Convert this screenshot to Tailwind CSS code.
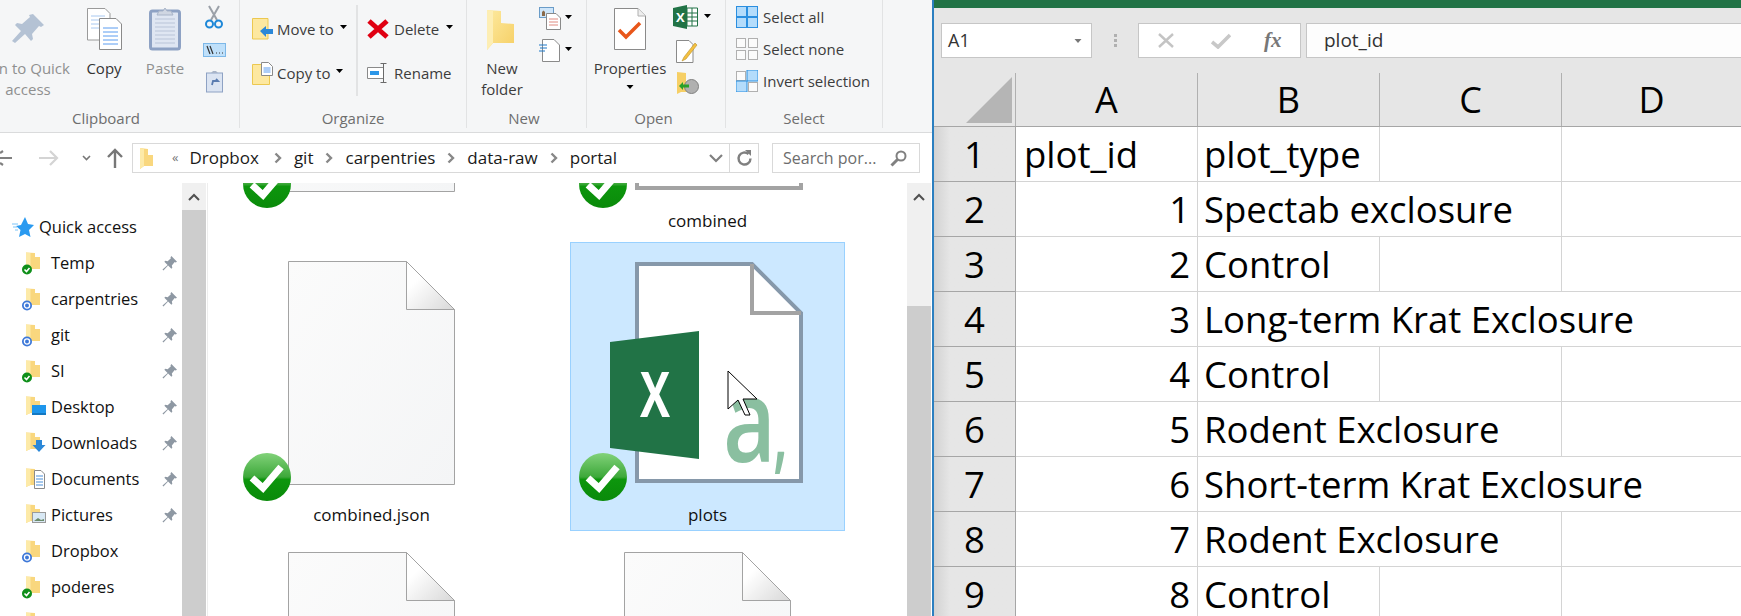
<!DOCTYPE html>
<html lang="en">
<head>
    <meta charset="UTF-8">
    <title>Explorer and Excel</title>
    <script src="https://cdn.jsdelivr.net/npm/@tailwindcss/browser@4"></script>
</head>
<body class="w-[1741px] h-[616px] overflow-hidden bg-white font-['Open_Sans',sans-serif]">

    <!-- shared icon shapes -->
    <svg class="absolute w-0 h-0">
        <defs>
            <linearGradient id="fold" x1="0" y1="0" x2="1" y2="1"><stop offset="0.3" stop-color="#ffffff"/><stop offset="1" stop-color="#d8d8d8"/></linearGradient>
            <linearGradient id="paper" x1="0" y1="0" x2="1" y2="1"><stop offset="0" stop-color="#fbfbfb"/><stop offset="1" stop-color="#f4f5f6"/></linearGradient>
            <linearGradient id="folderfill" x1="0" y1="0" x2="1" y2="1"><stop offset="0" stop-color="#fdeaa0"/><stop offset="1" stop-color="#f6cf65"/></linearGradient>
            <linearGradient id="gloss" x1="0" y1="0" x2="0" y2="1"><stop offset="0" stop-color="#82d27a"/><stop offset="0.5" stop-color="#3da83a"/><stop offset="0.55" stop-color="#0d960d"/><stop offset="1" stop-color="#0a8a0a"/></linearGradient>
            <symbol id="caret" viewBox="0 0 7 4"><path d="M0 0h7L3.500 4z" fill="#000"/></symbol>
            <symbol id="navpin" viewBox="0 0 16 16"><path d="M10 0l6 6-1.500 1-1-.5L10.500 10l.5 2.500-1 1-3.500-3.500L1.500 15.500.5 14.500 6 9.500 2.500 6l1-1 2.500.5L9.500 2.500 9 1.500z" fill="#8e98a3"/></symbol>
            <symbol id="navfolder" viewBox="0 0 24 24"><path d="M6 1.500l9 .5v4h5v12H10.500L6 20z" fill="#f9d77e"/><path d="M6 1.500l4.500 .5v16L6 20z" fill="#fdeaa8"/></symbol>
            <symbol id="synced" viewBox="0 0 24 24"><circle cx="7" cy="18.500" r="5" fill="#0f8f1a"/><path d="M4.500 18.500l2 2 3-3.500" fill="none" stroke="#fff" stroke-width="1.600"/></symbol>
            <symbol id="syncing" viewBox="0 0 24 24"><circle cx="7" cy="18.500" r="5" fill="#3d78d8"/><circle cx="7" cy="18.500" r="2.600" fill="none" stroke="#fff" stroke-width="1.300"/></symbol>
            <symbol id="tilecheck" viewBox="0 0 48 48"><circle cx="24" cy="24" r="24" fill="url(#gloss)"/><path d="M9 25l11 10L38 14" fill="none" stroke="#fff" stroke-width="7"/></symbol>
            <symbol id="blankfile" viewBox="0 0 275 262"><path d="M54.500 19.500H172.500L220.500 67.500V242.500H54.500z" fill="url(#paper)" stroke="#a3a3a3"/><path d="M172.500 19.500L220.500 67.500H172.500z" fill="url(#fold)" stroke="#a3a3a3"/></symbol>
            <symbol id="excelfile" viewBox="0 0 275 262"><path d="M67 22H182L231 71V239H67z" fill="#fff" stroke="currentColor" stroke-width="4"/><path d="M182 22V71H231" fill="none" stroke="#a3a3a3" stroke-width="4"/><path d="M40 100L129 89V217L40 206z" fill="#217346"/><text x="70" y="175" font-family="Open Sans" font-weight="700" font-size="62" fill="#fff" textLength="30" lengthAdjust="spacingAndGlyphs">X</text><text x="153" y="220" font-family="Open Sans" font-weight="600" font-size="116" fill="#8abfa0" textLength="53" lengthAdjust="spacingAndGlyphs">a</text><text x="203" y="220" font-family="Open Sans" font-weight="600" font-size="90" fill="#8abfa0" textLength="15" lengthAdjust="spacingAndGlyphs">,</text></symbol>
        </defs>
    </svg>

    <div class="flex h-[616px]">

        <!-- File Explorer window -->
        <div class="w-[934px] h-[616px] shrink-0 flex flex-col border-r-2 border-[#2b7fc0] overflow-hidden text-[15px] text-[#222]">

            <!-- ribbon -->
            <div class="h-[133px] shrink-0 flex bg-[#f5f6f7] border-b border-[#dadbdc] pb-[4px] text-[#3c3c3c]">

                <!-- Clipboard -->
                <div class="w-[240px] shrink-0 border-r border-[#e2e3e4] overflow-hidden">
                    <div class="w-[268px] -ml-[28px] flex flex-col">
                        <div class="h-[109px] flex">
                            <div class="w-[112px] flex flex-col items-center text-[#8f9090] leading-[21px] text-center">
                                <svg class="w-[32px] h-[52px] mt-[6px] mb-0 shrink-0" viewBox="0 0 32 52"><path d="M21 8l11 11-3 2-2-1-7 8 1 5-2 2-6-7-10 9-3-2 9-10-6-6 2-2 5 1 8-7-1-2z" fill="#b4c2d4"/></svg>
                                <span>Pin to Quick</span><span>access</span>
                            </div>
                            <div class="w-[40px] flex flex-col items-center leading-[21px] text-[#333]">
                                <svg class="w-[36px] h-[52px] shrink-0" viewBox="0 0 36 52">
                                    <path d="M1.500 8.500H19l5 5V40H1.500z" fill="#fff" stroke="#9a9a9a"/>
                                    <path d="M5 16h14M5 20h14M5 24h14M5 28h14" stroke="#a8c8f0"/>
                                    <path d="M13.500 18.500H30l5.500 5.500V49.500H13.500z" fill="#fff" stroke="#8a8a8a"/>
                                    <path d="M17 28h15M17 32h15M17 36h15M17 40h15M17 44h15" stroke="#5a9cf0"/>
                                </svg>
                                <span class="mt-[6px]">Copy</span>
                            </div>
                            <div class="w-[74px] ml-[4px] flex flex-col items-center leading-[21px] text-[#8f9090]">
                                <svg class="w-[32px] h-[52px] shrink-0" viewBox="0 0 32 52">
                                    <rect x="1.500" y="11" width="29" height="38" rx="2" fill="#dfe6f2" stroke="#8ea2c4" stroke-width="3"/>
                                    <path d="M6 19h20M6 23h20M6 27h20M6 31h20M6 35h20M6 39h20M6 43h20" stroke="#b9c4d8"/>
                                    <path d="M8 15l2-4h4l2-3 2 3h4l2 4z" fill="#cfd6e2" stroke="#a8b4c8"/>
                                </svg>
                                <span class="mt-[6px]">Paste</span>
                            </div>
                            <div class="w-[24px] flex flex-col items-center">
                                <svg class="w-[18px] h-[24px] mt-[5px] shrink-0" viewBox="0 0 18 24"><path d="M4 1l8 14M14 1L6 15" stroke="#9aa0a8" stroke-width="2"/><circle cx="4.500" cy="19" r="3.500" fill="none" stroke="#1e88d8" stroke-width="2"/><circle cx="13.500" cy="19" r="3.500" fill="none" stroke="#1e88d8" stroke-width="2"/></svg>
                                <svg class="w-[23px] h-[14px] mt-[14px] shrink-0" viewBox="0 0 23 14"><rect x=".5" y=".5" width="22" height="13" fill="#bfe0fa" stroke="#7db8e8"/><path d="M4 3l3 8M7 3l3 8" stroke="#333" stroke-width="1.200"/><path d="M13 10h1M16 10h1M19 10h1" stroke="#333"/></svg>
                                <svg class="w-[17px] h-[23px] mt-[13px] shrink-0" viewBox="0 0 17 23"><rect x=".5" y="3" width="16" height="19" fill="#dbe4f2" stroke="#8ea2c4"/><path d="M5 3l2-2h3l2 2z" fill="#a8b4c8"/><path d="M6 15l1-4h5l-2-2" fill="none" stroke="#5a7cb0" stroke-width="1.800"/></svg>
                            </div>
                        </div>
                        <div class="h-[19px] flex items-center justify-center text-[#6e6e6e]">Clipboard</div>
                    </div>
                </div>

                <!-- Organize -->
                <div class="w-[227px] shrink-0 border-r border-[#e2e3e4] flex flex-col">
                    <div class="h-[109px] flex">
                        <div class="w-[118px] h-[91px] mt-[5px] border-r-2 border-[#e2e3e4] pl-[12px] pt-[2px] flex flex-col">
                            <div class="h-[44px] flex items-center">
                                <svg class="w-[22px] h-[23px] shrink-0" viewBox="0 0 22 23"><path d="M.5 .5H16V21H.5z" fill="#fde8a0" stroke="#ecc850"/><path d="M8 13l6-5v3h7v5h-7v3z" fill="#2b88d8"/></svg>
                                <span class="ml-[3px]">Move to</span>
                                <svg class="w-[7px] h-[4px] ml-[6px] -mt-[4px]"><use href="#caret"/></svg>
                            </div>
                            <div class="h-[44px] flex items-center">
                                <svg class="w-[22px] h-[23px] shrink-0" viewBox="0 0 22 23"><path d="M.5 2.500H17.500V22.500H.5z" fill="#fde8a0" stroke="#ecc850"/><path d="M9.500 .5h7l4 4v9h-11z" fill="#fff" stroke="#8a8a8a"/><path d="M11.500 6h7M11.500 8h7M11.500 10h7" stroke="#5a9cf0"/></svg>
                                <span class="ml-[3px]">Copy to</span>
                                <svg class="w-[7px] h-[4px] ml-[6px] -mt-[4px]"><use href="#caret"/></svg>
                            </div>
                        </div>
                        <div class="pl-[9px] pt-[7px] flex flex-col">
                            <div class="h-[44px] flex items-center">
                                <svg class="w-[22px] h-[20px] shrink-0" viewBox="0 0 22 20"><path d="M2 2l18 16M20 2L2 18" stroke="#e00012" stroke-width="5"/></svg>
                                <span class="ml-[5px]">Delete</span>
                                <svg class="w-[7px] h-[4px] ml-[7px] -mt-[4px]"><use href="#caret"/></svg>
                            </div>
                            <div class="h-[44px] flex items-center">
                                <svg class="w-[22px] h-[20px] shrink-0" viewBox="0 0 22 20"><path d="M16 4.500H.5v11H16" fill="#fff" stroke="#8a8a8a"/><rect x="3" y="8" width="9" height="4" fill="#2b96e8"/><path d="M16.500 .5v19M13.500 .5h6M13.500 19.500h6" stroke="#6a6a6a"/></svg>
                                <span class="ml-[5px]">Rename</span>
                            </div>
                        </div>
                    </div>
                    <div class="h-[19px] flex items-center justify-center text-[#6e6e6e]">Organize</div>
                </div>

                <!-- New -->
                <div class="w-[120px] shrink-0 border-r border-[#e2e3e4] flex flex-col">
                    <div class="h-[109px] flex">
                        <div class="w-[70px] flex flex-col items-center leading-[21px]">
                            <svg class="w-[32px] h-[52px] shrink-0" viewBox="0 0 32 52"><path d="M1 10l14 1v12l13 1v19H7L1 50z" fill="url(#folderfill)"/><path d="M1 10l6 1v32L1 50z" fill="#fdeeb4"/></svg>
                            <span class="mt-[6px]">New</span><span>folder</span>
                        </div>
                        <div class="flex flex-col pl-[2px]">
                            <div class="h-[32px] mt-[2px] flex items-center">
                                <svg class="w-[22px] h-[23px] shrink-0" viewBox="0 0 22 23"><rect x=".5" y=".5" width="14" height="10" fill="#cfe6fa" stroke="#6a9cc8"/><path d="M3 9V5l1.500-1.500L6 5v4z" fill="#8a6a4a"/><path d="M7.500 6.500H17l4.500 4.500V22.500H7.500z" fill="#fff" stroke="#8a8a8a"/><path d="M10 12h9M10 15h9M10 18h9" stroke="#e08a80"/></svg>
                                <svg class="w-[7px] h-[4px] ml-[4px] -mt-[2px]"><use href="#caret"/></svg>
                            </div>
                            <div class="h-[32px] flex items-center">
                                <svg class="w-[21px] h-[23px] shrink-0" viewBox="0 0 21 23"><path d="M3.500 .5H15l5.500 5.500V22.500H3.500z" fill="#fff" stroke="#8a8a8a"/><path d="M0 6h8M1 9h7M0 12h6" stroke="#1e78c8" stroke-width="1.200"/></svg>
                                <svg class="w-[7px] h-[4px] ml-[5px] -mt-[2px]"><use href="#caret"/></svg>
                            </div>
                        </div>
                    </div>
                    <div class="h-[19px] flex items-center justify-center text-[#6e6e6e] pr-[5px]">New</div>
                </div>

                <!-- Open -->
                <div class="w-[139px] shrink-0 border-r border-[#e2e3e4] flex flex-col">
                    <div class="h-[109px] flex">
                        <div class="w-[86px] flex flex-col items-center leading-[21px]">
                            <svg class="w-[34px] h-[52px] shrink-0" viewBox="0 0 34 52"><path d="M1.500 8.500H25l7.500 7.500V49.500H1.500z" fill="#fff" stroke="#8a8a8a"/><path d="M25 8.500V16h7.500" fill="#eee" stroke="#b0b0b0"/><path d="M6 30l7 7 14-14" fill="none" stroke="#e8561a" stroke-width="3.500"/></svg>
                            <span class="mt-[6px]">Properties</span>
                            <svg class="w-[8px] h-[4px] mt-[6px]"><use href="#caret"/></svg>
                        </div>
                        <div class="flex flex-col">
                            <div class="h-[34px] flex items-center">
                                <svg class="w-[25px] h-[24px] shrink-0" viewBox="0 0 25 24"><path d="M14 3h10.500v18H14z" fill="#fff" stroke="#217346"/><path d="M14 8h10M14 12h10M14 16h10M19 3v18" stroke="#217346"/><path d="M0 3L14 0v24L0 21z" fill="#217346"/><text x="3" y="17" font-family="Open Sans" font-weight="700" font-size="13" fill="#fff">X</text></svg>
                                <svg class="w-[7px] h-[4px] ml-[6px] -mt-[2px]"><use href="#caret"/></svg>
                            </div>
                            <div class="h-[34px] flex items-center pl-[3px]">
                                <svg class="w-[22px] h-[23px] shrink-0" viewBox="0 0 22 23"><path d="M.5 .5H13l4 4V22.500H.5z" fill="#fff" stroke="#8a8a8a"/><path d="M19 3L8 17l-2 4 4-2L21 5z" fill="#f4c040" stroke="#b8902c" stroke-width=".6"/></svg>
                            </div>
                            <div class="h-[30px] flex items-center pl-[4px]">
                                <svg class="w-[22px] h-[22px] shrink-0" viewBox="0 0 22 22"><path d="M0 0l9 1v10h2v9H4l-4 2z" fill="#f6cf65"/><circle cx="14.500" cy="14.500" r="7" fill="#b0b0b0" stroke="#808080"/><path d="M2 14l4-4v2.500h6v3H6V18z" fill="#2aa02a"/></svg>
                            </div>
                        </div>
                    </div>
                    <div class="h-[19px] flex items-center justify-center text-[#6e6e6e] -ml-[5px]">Open</div>
                </div>

                <!-- Select -->
                <div class="w-[157px] shrink-0 border-r border-[#e2e3e4] flex flex-col">
                    <div class="h-[109px] pl-[10px] pt-[1px] flex flex-col">
                        <div class="h-[32px] flex items-center">
                            <svg class="w-[22px] h-[22px] shrink-0" viewBox="0 0 22 22"><rect x=".5" y=".5" width="21" height="21" fill="#b4dcfb" stroke="#2b8fe0"/><path d="M11 0v22M0 11h22" stroke="#2b8fe0" stroke-width="2"/></svg>
                            <span class="ml-[5px]">Select all</span>
                        </div>
                        <div class="h-[32px] flex items-center">
                            <svg class="w-[22px] h-[22px] shrink-0" viewBox="0 0 22 22" fill="#fbfbfb" stroke="#b0b0b0"><rect x=".5" y=".5" width="9" height="9"/><rect x="12.500" y=".5" width="9" height="9"/><rect x=".5" y="12.500" width="9" height="9"/><rect x="12.500" y="12.500" width="9" height="9"/></svg>
                            <span class="ml-[5px]">Select none</span>
                        </div>
                        <div class="h-[32px] flex items-center">
                            <svg class="w-[22px] h-[22px] shrink-0" viewBox="0 0 22 22"><rect x=".5" y="1.500" width="9" height="9" fill="#fbfbfb" stroke="#b0b0b0"/><rect x="11" y="0" width="11" height="11" fill="#b4dcfb" stroke="#2b8fe0"/><rect x="0" y="11" width="11" height="11" fill="#b4dcfb" stroke="#2b8fe0"/><rect x="12.500" y="12.500" width="9" height="9" fill="#fbfbfb" stroke="#b0b0b0"/></svg>
                            <span class="ml-[5px]">Invert selection</span>
                        </div>
                    </div>
                    <div class="h-[19px] flex items-center justify-center text-[#6e6e6e]">Select</div>
                </div>
            </div>

            <!-- address bar -->
            <div class="h-[50px] shrink-0 flex items-center">
                <svg class="w-[12px] h-[18px] shrink-0" viewBox="0 0 12 18"><path d="M0 9h12M0 4l3-2M0 14l3 2" stroke="#808080" stroke-width="2.200"/></svg>
                <svg class="w-[20px] h-[18px] ml-[27px] shrink-0" viewBox="0 0 20 18"><path d="M0 9h18M11 2l7 7-7 7" fill="none" stroke="#d4d4d4" stroke-width="2.200"/></svg>
                <svg class="w-[9px] h-[6px] ml-[23px] shrink-0" viewBox="0 0 9 6"><path d="M1 1l3.500 3.500L8 1" fill="none" stroke="#777" stroke-width="1.600"/></svg>
                <svg class="w-[18px] h-[20px] ml-[15px] shrink-0" viewBox="0 0 18 20"><path d="M9 20V2M2 9l7-7 7 7" fill="none" stroke="#777" stroke-width="2.400"/></svg>
                <div class="w-[627px] h-[30px] ml-[8px] shrink-0 flex items-center border border-[#d9d9d9] text-[17px] text-[#1a1a1a]">
                    <svg class="w-[15px] h-[21px] ml-[6px] shrink-0" viewBox="0 0 15 21"><path d="M1 0l8 1v6h5v11H5l-4 3z" fill="#f9d77e"/><path d="M1 0l4 1v17l-4 3z" fill="#fdeaa8"/></svg>
                    <span class="ml-[18px] text-[13px] text-[#777]">«</span>
                    <span class="ml-[11px]">Dropbox</span>
                    <svg class="w-[8px] h-[12px] ml-[15px]" viewBox="0 0 8 12"><path d="M1.500 1.500L6 6l-4.500 4.500" fill="none" stroke="#888" stroke-width="2.400"/></svg>
                    <span class="ml-[12px]">git</span>
                    <svg class="w-[8px] h-[12px] ml-[12px]" viewBox="0 0 8 12"><path d="M1.500 1.500L6 6l-4.500 4.500" fill="none" stroke="#888" stroke-width="2.400"/></svg>
                    <span class="ml-[12px]">carpentries</span>
                    <svg class="w-[8px] h-[12px] ml-[12px]" viewBox="0 0 8 12"><path d="M1.500 1.500L6 6l-4.500 4.500" fill="none" stroke="#888" stroke-width="2.400"/></svg>
                    <span class="ml-[12px]">data-raw</span>
                    <svg class="w-[8px] h-[12px] ml-[12px]" viewBox="0 0 8 12"><path d="M1.500 1.500L6 6l-4.500 4.500" fill="none" stroke="#888" stroke-width="2.400"/></svg>
                    <span class="ml-[12px]">portal</span>
                    <svg class="w-[14px] h-[9px] ml-auto mr-[6px]" viewBox="0 0 14 9"><path d="M1 1l6 6 6-6" fill="none" stroke="#808080" stroke-width="2.200"/></svg>
                    <div class="w-[29px] h-full border-l border-[#d9d9d9] flex items-center justify-center">
                        <svg class="w-[17px] h-[17px]" viewBox="0 0 17 17"><path d="M14.500 8.500a6 6 0 1 1-2-4.500" fill="none" stroke="#808080" stroke-width="2.400"/><path d="M9 0h6v6z" fill="#808080"/></svg>
                    </div>
                </div>
                <div class="w-[148px] h-[30px] ml-[13px] shrink-0 flex items-center border border-[#d9d9d9] pl-[10px] text-[16px] text-[#6d6d6d]">
                    <span>Search por...</span>
                    <svg class="w-[17px] h-[17px] ml-auto mr-[12px]" viewBox="0 0 17 17"><circle cx="11" cy="6" r="4.500" fill="none" stroke="#808080" stroke-width="2"/><path d="M7.500 9.500L1.500 15.500" stroke="#808080" stroke-width="3"/></svg>
                </div>
            </div>

            <!-- body: navigation pane and file list -->
            <div class="flex-1 flex min-h-0 text-[#111]">

                <!-- navigation pane -->
                <div class="w-[182px] shrink-0 pt-[26px] overflow-hidden text-[16.5px]">
                    <div class="h-[36px] flex items-center pl-[12px]">
                        <svg class="w-[22px] h-[21px] shrink-0" viewBox="0 0 22 21"><path d="M13 0l3 7 6 1-5 5 1.500 7L13 17l-6 3 1.500-7L4 9l5-1z" fill="#2a9af0"/><path d="M0 7h6M1 10h4M3 13h3" stroke="#7cc4f8"/></svg>
                        <span class="ml-[5px]">Quick access</span>
                    </div>
                    <div class="h-[36px] flex items-center pl-[20px] pr-[5px]">
                        <svg class="w-[24px] h-[24px] shrink-0"><use href="#navfolder"/><use href="#synced"/></svg>
                        <span class="ml-[7px]">Temp</span>
                        <svg class="w-[15px] h-[15px] ml-auto"><use href="#navpin"/></svg>
                    </div>
                    <div class="h-[36px] flex items-center pl-[20px] pr-[5px]">
                        <svg class="w-[24px] h-[24px] shrink-0"><use href="#navfolder"/><use href="#syncing"/></svg>
                        <span class="ml-[7px]">carpentries</span>
                        <svg class="w-[15px] h-[15px] ml-auto"><use href="#navpin"/></svg>
                    </div>
                    <div class="h-[36px] flex items-center pl-[20px] pr-[5px]">
                        <svg class="w-[24px] h-[24px] shrink-0"><use href="#navfolder"/><use href="#syncing"/></svg>
                        <span class="ml-[7px]">git</span>
                        <svg class="w-[15px] h-[15px] ml-auto"><use href="#navpin"/></svg>
                    </div>
                    <div class="h-[36px] flex items-center pl-[20px] pr-[5px]">
                        <svg class="w-[24px] h-[24px] shrink-0"><use href="#navfolder"/><use href="#synced"/></svg>
                        <span class="ml-[7px]">SI</span>
                        <svg class="w-[15px] h-[15px] ml-auto"><use href="#navpin"/></svg>
                    </div>
                    <div class="h-[36px] flex items-center pl-[20px] pr-[5px]">
                        <svg class="w-[26px] h-[24px] shrink-0" viewBox="0 0 26 24"><use href="#navfolder" width="24" height="24"/><rect x="12" y="10" width="14" height="10" fill="#1e96ec"/><path d="M12 19h14" stroke="#0b5a96"/></svg>
                        <span class="ml-[5px]">Desktop</span>
                        <svg class="w-[15px] h-[15px] ml-auto"><use href="#navpin"/></svg>
                    </div>
                    <div class="h-[36px] flex items-center pl-[20px] pr-[5px]">
                        <svg class="w-[26px] h-[24px] shrink-0" viewBox="0 0 26 24"><use href="#navfolder" width="24" height="24"/><path d="M16 9h6v5h3.500L19 21l-6.500-7H16z" fill="#2b88d8"/></svg>
                        <span class="ml-[5px]">Downloads</span>
                        <svg class="w-[15px] h-[15px] ml-auto"><use href="#navpin"/></svg>
                    </div>
                    <div class="h-[36px] flex items-center pl-[20px] pr-[5px]">
                        <svg class="w-[26px] h-[24px] shrink-0" viewBox="0 0 26 24"><use href="#navfolder" width="24" height="24"/><path d="M14.500 3.500H21l3.500 3.500v14.500h-10z" fill="#fff" stroke="#8a8a8a"/><path d="M16 9h7M16 12h7M16 15h7M16 18h7" stroke="#4a8fd8"/></svg>
                        <span class="ml-[5px]">Documents</span>
                        <svg class="w-[15px] h-[15px] ml-auto"><use href="#navpin"/></svg>
                    </div>
                    <div class="h-[36px] flex items-center pl-[20px] pr-[5px]">
                        <svg class="w-[26px] h-[24px] shrink-0" viewBox="0 0 26 24"><use href="#navfolder" width="24" height="24"/><rect x="12.500" y="9.500" width="13" height="10" fill="#d8e8f4" stroke="#9a9a9a"/><path d="M14 18l4-3 3 2 3-1v2z" fill="#6a8a6a"/></svg>
                        <span class="ml-[5px]">Pictures</span>
                        <svg class="w-[15px] h-[15px] ml-auto"><use href="#navpin"/></svg>
                    </div>
                    <div class="h-[36px] flex items-center pl-[20px] pr-[5px]">
                        <svg class="w-[24px] h-[24px] shrink-0"><use href="#navfolder"/><use href="#syncing"/></svg>
                        <span class="ml-[7px]">Dropbox</span>
                    </div>
                    <div class="h-[36px] flex items-center pl-[20px] pr-[5px]">
                        <svg class="w-[24px] h-[24px] shrink-0"><use href="#navfolder"/><use href="#synced"/></svg>
                        <span class="ml-[7px]">poderes</span>
                    </div>
                    <div class="h-[36px] flex items-center pl-[20px] pr-[5px]">
                        <svg class="w-[24px] h-[24px] shrink-0"><use href="#navfolder"/></svg>
                    </div>
                </div>

                <!-- navigation scrollbar -->
                <div class="w-[24px] shrink-0 flex flex-col bg-[#cdcdcd]">
                    <div class="h-[27px] bg-[#f0f0f0] flex items-center justify-center">
                        <svg class="w-[12px] h-[8px]" viewBox="0 0 12 8"><path d="M1 7l5-5 5 5" fill="none" stroke="#505050" stroke-width="2"/></svg>
                    </div>
                </div>
                <div class="w-[2px] shrink-0 border-r border-[#ededed]"></div>

                <!-- file tiles -->
                <div class="w-[699px] shrink-0 overflow-hidden text-[17px]">
                    <div class="-mt-[234px] ml-[26px] grid grid-cols-[275px_275px] gap-x-[61px] gap-y-[4px]">
                        <div class="h-[289px] flex flex-col items-center">
                            <svg class="w-[275px] h-[262px] shrink-0"><use href="#blankfile"/><use href="#tilecheck" x="9" y="211" width="48" height="48"/></svg>
                            <span class="leading-[22px]">&nbsp;</span>
                        </div>
                        <div class="h-[289px] flex flex-col items-center">
                            <svg class="w-[275px] h-[262px] shrink-0 text-[#a3a3a3]"><use href="#excelfile"/><use href="#tilecheck" x="9" y="211" width="48" height="48"/></svg>
                            <span class="leading-[22px] -mt-[1px]">combined</span>
                        </div>
                        <div class="h-[289px] flex flex-col items-center">
                            <svg class="w-[275px] h-[262px] shrink-0"><use href="#blankfile"/><use href="#tilecheck" x="9" y="211" width="48" height="48"/></svg>
                            <span class="leading-[22px]">combined.json</span>
                        </div>
                        <div class="h-[289px] flex flex-col items-center bg-[#cce8ff] outline outline-[#99d1ff] -outline-offset-1">
                            <svg class="w-[275px] h-[262px] shrink-0 text-[#8698aa]" viewBox="0 0 275 262">
                                <use href="#excelfile"/>
                                <use href="#tilecheck" x="9" y="211" width="48" height="48"/>
                                <path d="M158 129V167L168 158L175 173L180 173L173 157H187z" fill="#fff" stroke="#000"/>
                            </svg>
                            <span class="leading-[22px]">plots</span>
                        </div>
                        <div class="h-[289px] -mt-[2px]">
                            <svg class="w-[275px] h-[262px]"><use href="#blankfile"/></svg>
                        </div>
                        <div class="h-[289px] -mt-[2px]">
                            <svg class="w-[275px] h-[262px]"><use href="#blankfile"/></svg>
                        </div>
                    </div>
                </div>

                <!-- file list scrollbar -->
                <div class="w-[24px] shrink-0 flex flex-col bg-[#cdcdcd]">
                    <div class="h-[123px] bg-[#f0f0f0] flex justify-center pt-[10px]">
                        <svg class="w-[12px] h-[8px]" viewBox="0 0 12 8"><path d="M1 7l5-5 5 5" fill="none" stroke="#505050" stroke-width="2"/></svg>
                    </div>
                </div>
            </div>
        </div>

        <!-- Excel window -->
        <div class="flex-1 min-w-0 flex flex-col overflow-hidden">
            <div class="h-[8px] shrink-0 bg-[#217346]"></div>

            <!-- formula bar -->
            <div class="h-[65px] shrink-0 flex items-start pt-[15px] bg-[#e6e6e6] text-[18px] text-[#333]">
                <div class="w-[151px] h-[35px] ml-[7px] shrink-0 flex items-center justify-between bg-white border border-[#c6c6c6] pl-[6px] pr-[9px]">
                    <span>A1</span>
                    <svg class="w-[8px] h-[4px]" viewBox="0 0 7 4"><path d="M0 0h7L3.500 4z" fill="#777"/></svg>
                </div>
                <div class="w-[46px] h-[35px] shrink-0 flex flex-col items-center justify-center gap-[2px]">
                    <i class="w-[3px] h-[3px] bg-[#b0b0b0]"></i><i class="w-[3px] h-[3px] bg-[#b0b0b0]"></i><i class="w-[3px] h-[3px] bg-[#b0b0b0]"></i>
                </div>
                <div class="w-[163px] h-[35px] shrink-0 flex items-center bg-white border border-[#c6c6c6] pl-[18px]">
                    <svg class="w-[18px] h-[17px]" viewBox="0 0 18 17"><path d="M2 2l14 13M16 2L2 15" stroke="#c4c4c4" stroke-width="2.400"/></svg>
                    <svg class="w-[20px] h-[16px] ml-[36px]" viewBox="0 0 20 16"><path d="M1 9l6 5L19 2" fill="none" stroke="#c8c8c8" stroke-width="3.600"/></svg>
                    <span class="ml-[33px] font-['Liberation_Serif',serif] italic font-bold text-[21px] text-[#777]">fx</span>
                </div>
                <div class="flex-1 h-[35px] ml-[5px] flex items-center bg-[#fdfdfd] border-y border-l border-[#c6c6c6] pl-[17px] text-[19px]">plot_id</div>
            </div>

            <!-- column headers -->
            <div class="h-[54px] shrink-0 flex bg-[#e6e6e6] border-b border-[#a6a6a6] text-[36px] text-black">
                <div class="w-[82px] shrink-0 border-r border-[#b0b0b0] flex items-end justify-end pr-[3px] pb-[3px]">
                    <svg class="w-[46px] h-[46px]" viewBox="0 0 46 46"><path d="M46 0V46H0z" fill="#b5b5b5"/></svg>
                </div>
                <div class="w-[182px] shrink-0 border-r border-[#b0b0b0] flex items-center justify-center">A</div>
                <div class="w-[182px] shrink-0 border-r border-[#b0b0b0] flex items-center justify-center">B</div>
                <div class="w-[182px] shrink-0 border-r border-[#b0b0b0] flex items-center justify-center">C</div>
                <div class="flex-1 flex items-center justify-center">D</div>
            </div>

            <!-- sheet rows -->
            <div class="text-[36.5px] text-black">
                <div class="h-[55px] flex">
                    <div class="w-[82px] shrink-0 flex items-center justify-center bg-linear-to-r from-[#d2d2d2] to-[#e6e6e6] to-20% border-r border-b border-[#a6a6a6]">1</div>
                    <div class="w-[182px] shrink-0 flex items-center pl-[8px] border-r border-b border-[#d4d4d4]">plot_id</div>
                    <div class="w-[182px] shrink-0 flex items-center pl-[6px] border-r border-b border-[#d4d4d4]">plot_type</div>
                    <div class="w-[182px] shrink-0 border-r border-b border-[#d4d4d4]"></div>
                    <div class="flex-1 border-b border-[#d4d4d4]"></div>
                </div>
                <div class="h-[55px] flex">
                    <div class="w-[82px] shrink-0 flex items-center justify-center bg-linear-to-r from-[#d2d2d2] to-[#e6e6e6] to-20% border-r border-b border-[#a6a6a6]">2</div>
                    <div class="w-[182px] shrink-0 flex items-center justify-end pr-[7px] border-r border-b border-[#d4d4d4]">1</div>
                    <div class="w-[182px] shrink-0 flex items-center pl-[6px] whitespace-nowrap border-b border-[#d4d4d4]">Spectab exclosure</div>
                    <div class="w-[182px] shrink-0 border-r border-b border-[#d4d4d4]"></div>
                    <div class="flex-1 border-b border-[#d4d4d4]"></div>
                </div>
                <div class="h-[55px] flex">
                    <div class="w-[82px] shrink-0 flex items-center justify-center bg-linear-to-r from-[#d2d2d2] to-[#e6e6e6] to-20% border-r border-b border-[#a6a6a6]">3</div>
                    <div class="w-[182px] shrink-0 flex items-center justify-end pr-[7px] border-r border-b border-[#d4d4d4]">2</div>
                    <div class="w-[182px] shrink-0 flex items-center pl-[6px] border-r border-b border-[#d4d4d4]">Control</div>
                    <div class="w-[182px] shrink-0 border-r border-b border-[#d4d4d4]"></div>
                    <div class="flex-1 border-b border-[#d4d4d4]"></div>
                </div>
                <div class="h-[55px] flex">
                    <div class="w-[82px] shrink-0 flex items-center justify-center bg-linear-to-r from-[#d2d2d2] to-[#e6e6e6] to-20% border-r border-b border-[#a6a6a6]">4</div>
                    <div class="w-[182px] shrink-0 flex items-center justify-end pr-[7px] border-r border-b border-[#d4d4d4]">3</div>
                    <div class="w-[182px] shrink-0 flex items-center pl-[6px] whitespace-nowrap border-b border-[#d4d4d4]">Long-term Krat Exclosure</div>
                    <div class="w-[182px] shrink-0 border-b border-[#d4d4d4]"></div>
                    <div class="flex-1 border-b border-[#d4d4d4]"></div>
                </div>
                <div class="h-[55px] flex">
                    <div class="w-[82px] shrink-0 flex items-center justify-center bg-linear-to-r from-[#d2d2d2] to-[#e6e6e6] to-20% border-r border-b border-[#a6a6a6]">5</div>
                    <div class="w-[182px] shrink-0 flex items-center justify-end pr-[7px] border-r border-b border-[#d4d4d4]">4</div>
                    <div class="w-[182px] shrink-0 flex items-center pl-[6px] border-r border-b border-[#d4d4d4]">Control</div>
                    <div class="w-[182px] shrink-0 border-r border-b border-[#d4d4d4]"></div>
                    <div class="flex-1 border-b border-[#d4d4d4]"></div>
                </div>
                <div class="h-[55px] flex">
                    <div class="w-[82px] shrink-0 flex items-center justify-center bg-linear-to-r from-[#d2d2d2] to-[#e6e6e6] to-20% border-r border-b border-[#a6a6a6]">6</div>
                    <div class="w-[182px] shrink-0 flex items-center justify-end pr-[7px] border-r border-b border-[#d4d4d4]">5</div>
                    <div class="w-[182px] shrink-0 flex items-center pl-[6px] whitespace-nowrap border-b border-[#d4d4d4]">Rodent Exclosure</div>
                    <div class="w-[182px] shrink-0 border-r border-b border-[#d4d4d4]"></div>
                    <div class="flex-1 border-b border-[#d4d4d4]"></div>
                </div>
                <div class="h-[55px] flex">
                    <div class="w-[82px] shrink-0 flex items-center justify-center bg-linear-to-r from-[#d2d2d2] to-[#e6e6e6] to-20% border-r border-b border-[#a6a6a6]">7</div>
                    <div class="w-[182px] shrink-0 flex items-center justify-end pr-[7px] border-r border-b border-[#d4d4d4]">6</div>
                    <div class="w-[182px] shrink-0 flex items-center pl-[6px] whitespace-nowrap border-b border-[#d4d4d4]">Short-term Krat Exclosure</div>
                    <div class="w-[182px] shrink-0 border-b border-[#d4d4d4]"></div>
                    <div class="flex-1 border-b border-[#d4d4d4]"></div>
                </div>
                <div class="h-[55px] flex">
                    <div class="w-[82px] shrink-0 flex items-center justify-center bg-linear-to-r from-[#d2d2d2] to-[#e6e6e6] to-20% border-r border-b border-[#a6a6a6]">8</div>
                    <div class="w-[182px] shrink-0 flex items-center justify-end pr-[7px] border-r border-b border-[#d4d4d4]">7</div>
                    <div class="w-[182px] shrink-0 flex items-center pl-[6px] whitespace-nowrap border-b border-[#d4d4d4]">Rodent Exclosure</div>
                    <div class="w-[182px] shrink-0 border-r border-b border-[#d4d4d4]"></div>
                    <div class="flex-1 border-b border-[#d4d4d4]"></div>
                </div>
                <div class="h-[55px] flex">
                    <div class="w-[82px] shrink-0 flex items-center justify-center bg-linear-to-r from-[#d2d2d2] to-[#e6e6e6] to-20% border-r border-b border-[#a6a6a6]">9</div>
                    <div class="w-[182px] shrink-0 flex items-center justify-end pr-[7px] border-r border-b border-[#d4d4d4]">8</div>
                    <div class="w-[182px] shrink-0 flex items-center pl-[6px] border-r border-b border-[#d4d4d4]">Control</div>
                    <div class="w-[182px] shrink-0 border-r border-b border-[#d4d4d4]"></div>
                    <div class="flex-1 border-b border-[#d4d4d4]"></div>
                </div>
            </div>
        </div>
    </div>
</body>
</html>
